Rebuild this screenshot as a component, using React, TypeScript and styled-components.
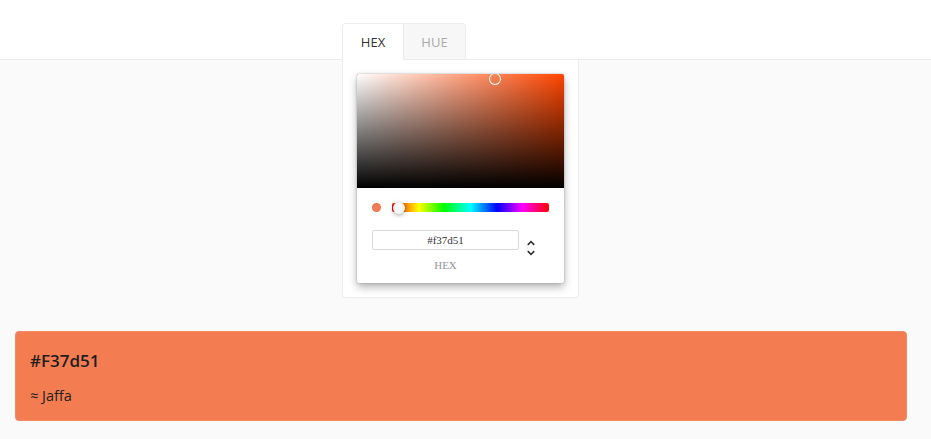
import React from "react";
import styled, { createGlobalStyle } from "styled-components";

const Global = createGlobalStyle`
  html, body { margin: 0; padding: 0; background: #fafafa; }
  body { font-family: "Open Sans", "Noto Sans", sans-serif; color: #222; }
`;

const Page = styled.div`
  width: 931px;
  min-height: 439px;
  background: #fafafa;
`;

const Header = styled.div`
  height: 59px;
  background: #fff;
  border-bottom: 1px solid #ececec;
  display: flex;
  align-items: flex-end;
  padding-left: 342px;
  box-sizing: content-box;
`;

const TabList = styled.div`
  display: flex;
  margin-bottom: -1px;
`;

const Tab = styled.div<{ $active?: boolean }>`
  width: ${(p) => (p.$active ? "60px" : "61px")};
  height: 35px;
  display: flex;
  align-items: center;
  justify-content: center;
  font-family: "Open Sans", "Noto Sans", sans-serif;
  font-size: 13px;
  color: ${(p) => (p.$active ? "#333" : "#aaa")};
  background: ${(p) => (p.$active ? "#fff" : "#f7f7f7")};
  border: 1px solid #ececec;
  border-bottom: 1px solid ${(p) => (p.$active ? "#fff" : "#ececec")};
  border-left-width: ${(p) => (p.$active ? "1px" : "0")};
  border-radius: ${(p) => (p.$active ? "4px 0 0 0" : "0 4px 0 0")};
  position: relative;
  z-index: 1;
`;

const Panel = styled.div`
  margin-left: 342px;
  width: 237px;
  height: 238px;
  box-sizing: border-box;
  background: #fff;
  border: 1px solid #ececec;
  border-top: none;
  border-radius: 0 0 4px 4px;
  padding: 14px 0 0 14px;
`;

const Picker = styled.div`
  width: 207px;
  background: #fff;
  border-radius: 2px;
  box-shadow: 0 0 2px rgba(0, 0, 0, 0.3), 0 4px 8px rgba(0, 0, 0, 0.3);
  font-family: "Liberation Serif", "Times New Roman", serif;
`;

const Saturation = styled.div`
  position: relative;
  height: 114px;
  border-radius: 2px 2px 0 0;
  overflow: hidden;
  background: #ff4500;
`;

const SatLayer = styled.div<{ $kind: "white" | "black" }>`
  position: absolute;
  inset: 0;
  background: ${(p) =>
    p.$kind === "white"
      ? "linear-gradient(to right, #fff, rgba(255,255,255,0))"
      : "linear-gradient(to top, #000, rgba(0,0,0,0))"};
`;

const SatPointer = styled.div`
  position: absolute;
  width: 12px;
  height: 12px;
  border-radius: 6px;
  box-shadow: inset 0 0 0 1px #fff;
  transform: translate(-6px, -6px);
`;

const Body = styled.div`
  padding: 15px 15px 12px 15px;
`;

const Controls = styled.div`
  display: flex;
  align-items: center;
`;

const SwatchCol = styled.div`
  width: 20px;
  display: flex;
  align-items: center;
`;

const Swatch = styled.div`
  width: 9px;
  height: 9px;
  border-radius: 50%;
  background: #f37d51;
  box-shadow: inset 0 0 0 1px rgba(0, 0, 0, 0.05);
`;

const Hue = styled.div`
  flex: 1;
  height: 9px;
  position: relative;
  border-radius: 2px;
  background: linear-gradient(
    to right,
    #f00 0%,
    #ff0 17%,
    #0f0 33%,
    #0ff 50%,
    #00f 67%,
    #f0f 83%,
    #f00 100%
  );
`;

const HuePointer = styled.div`
  position: absolute;
  top: -1px;
  width: 12px;
  height: 12px;
  border-radius: 6px;
  background: rgb(248, 248, 248);
  box-shadow: 0 1px 4px 0 rgba(0, 0, 0, 0.37);
  transform: translateX(-6px);
`;

const Fields = styled.div`
  display: flex;
  padding-top: 18px;
`;

const Field = styled.div`
  width: 147px;
`;

const Input = styled.div`
  height: 20px;
  box-sizing: border-box;
  border-radius: 2px;
  box-shadow: inset 0 0 0 1px #dadada;
  font-size: 11px;
  color: #333;
  display: flex;
  align-items: center;
  justify-content: center;
`;

const Label = styled.div`
  margin-top: 10px;
  font-size: 11px;
  line-height: 11px;
  color: #969696;
  text-align: center;
  text-transform: uppercase;
`;

const Toggle = styled.div`
  padding-left: 2px;
  padding-top: 8px;
`;

const Card = styled.div`
  margin: 33px 24px 0 15px;
  height: 90px;
  box-sizing: border-box;
  background: #f37d51;
  border: 1px solid #f58a62;
  border-radius: 4px;
  padding: 17px 14px 0;
  display: flex;
  flex-direction: column;
`;

const Title = styled.div`
  font-family: "Open Sans", "Noto Sans", sans-serif;
  font-size: 17px;
  font-weight: 600;
  line-height: 24px;
  color: #1e1e1e;
`;

const Name = styled.div`
  margin-top: 13px;
  font-family: "Open Sans", "Noto Sans", sans-serif;
  font-size: 14.5px;
  line-height: 20px;
  color: #1e1e1e;
`;

export default function App() {
  const sat = 0.667;
  const val = 0.953;
  const hue = 16.3;
  return (
    <Page>
      <Global />
      <Header>
        <TabList>
          <Tab $active>HEX</Tab>
          <Tab>HUE</Tab>
        </TabList>
      </Header>
      <Panel>
        <Picker>
          <Saturation>
            <SatLayer $kind="white" />
            <SatLayer $kind="black" />
            <SatPointer
              style={{ left: `${sat * 100}%`, top: `${(1 - val) * 100}%` }}
            />
          </Saturation>
          <Body>
            <Controls>
              <SwatchCol>
                <Swatch />
              </SwatchCol>
              <Hue>
                <HuePointer style={{ left: `${(hue / 360) * 100}%` }} />
              </Hue>
            </Controls>
            <Fields>
              <Field>
                <Input>#f37d51</Input>
                <Label>hex</Label>
              </Field>
              <Toggle>
                <svg width="20" height="20" viewBox="0 0 24 24">
                  <path
                    fill="#333"
                    d="M12,18.17L8.83,15L7.41,16.41L12,21L16.59,16.41L15.17,15M12,5.83L15.17,9L16.59,7.59L12,3L7.41,7.59L8.83,9L12,5.83Z"
                  />
                </svg>
              </Toggle>
            </Fields>
          </Body>
        </Picker>
      </Panel>
      <Card>
        <Title>#F37d51</Title>
        <Name>≈ Jaffa</Name>
      </Card>
    </Page>
  );
}
